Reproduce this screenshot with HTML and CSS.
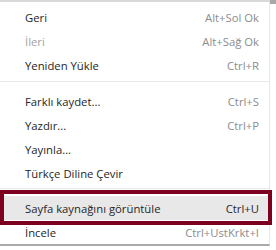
FILE: index.html
```html
<!DOCTYPE html>
<html lang="tr">
<head>
<meta charset="utf-8">
<link rel="stylesheet" href="styles.css">
</head>
<body>
<div class="topbar"><span class="topbar-corner"></span></div>
<div class="menu">
  <div class="item"><span class="label">Geri</span><span class="key">Alt+Sol Ok</span></div>
  <div class="item disabled"><span class="label">İleri</span><span class="key">Alt+Sağ Ok</span></div>
  <div class="item"><span class="label">Yeniden Yükle</span><span class="key">Ctrl+R</span></div>
  <div class="sep"></div>
  <div class="item"><span class="label">Farklı kaydet...</span><span class="key">Ctrl+S</span></div>
  <div class="item"><span class="label">Yazdır...</span><span class="key">Ctrl+P</span></div>
  <div class="item"><span class="label">Yayınla...</span></div>
  <div class="item"><span class="label">Türkçe Diline Çevir</span></div>
  <div class="sep sep-tight"></div>
  <div class="item active"><span class="label">Sayfa kaynağını görüntüle</span><span class="key">Ctrl+U</span></div>
  <div class="item"><span class="label">İncele</span><span class="key">Ctrl+UstKrkt+I</span></div>
</div>
<div class="highlight"></div>
</body>
</html>
```
FILE: styles.css
```css
html, body {
  margin: 0;
  padding: 0;
  background: #ffffff;
}
body {
  width: 276px;
  height: 250px;
  overflow: hidden;
  position: relative;
  font-family: "Open Sans", "Noto Sans", sans-serif;
  font-size: 11.3px;
}
.topbar {
  height: 2px;
  width: 270px;
  background: #d9d9d9;
  position: relative;
}
.topbar-corner {
  position: absolute;
  left: 270px;
  top: 0;
  width: 6px;
  height: 4px;
  background: #a8a8a8;
}
.menu {
  width: 269px;
  border-right: 1px solid #e6e6e6;
  border-bottom: 2px solid #a9a9a9;
  padding-top: 3px;
  background: #fff;
}
.item {
  height: 24px;
  display: flex;
  align-items: center;
  justify-content: space-between;
  padding: 0 10px 0 25px;
  color: #262626;
}
.item.disabled .label {
  color: #a3a3a3;
}
.key {
  color: #8c8c8c;
}
.item.active {
  background: #e8e8e8;
}
.item.active .key {
  color: #2a2a2a;
}
.sep {
  height: 1px;
  background: #e9e9e9;
  margin: 4px 0 7px;
}
.sep-tight {
  margin: 3px 0 7px;
}
.highlight {
  position: absolute;
  left: 0;
  top: 190px;
  width: 264px;
  height: 27px;
  border: 4px solid #7d0021;
}
```
